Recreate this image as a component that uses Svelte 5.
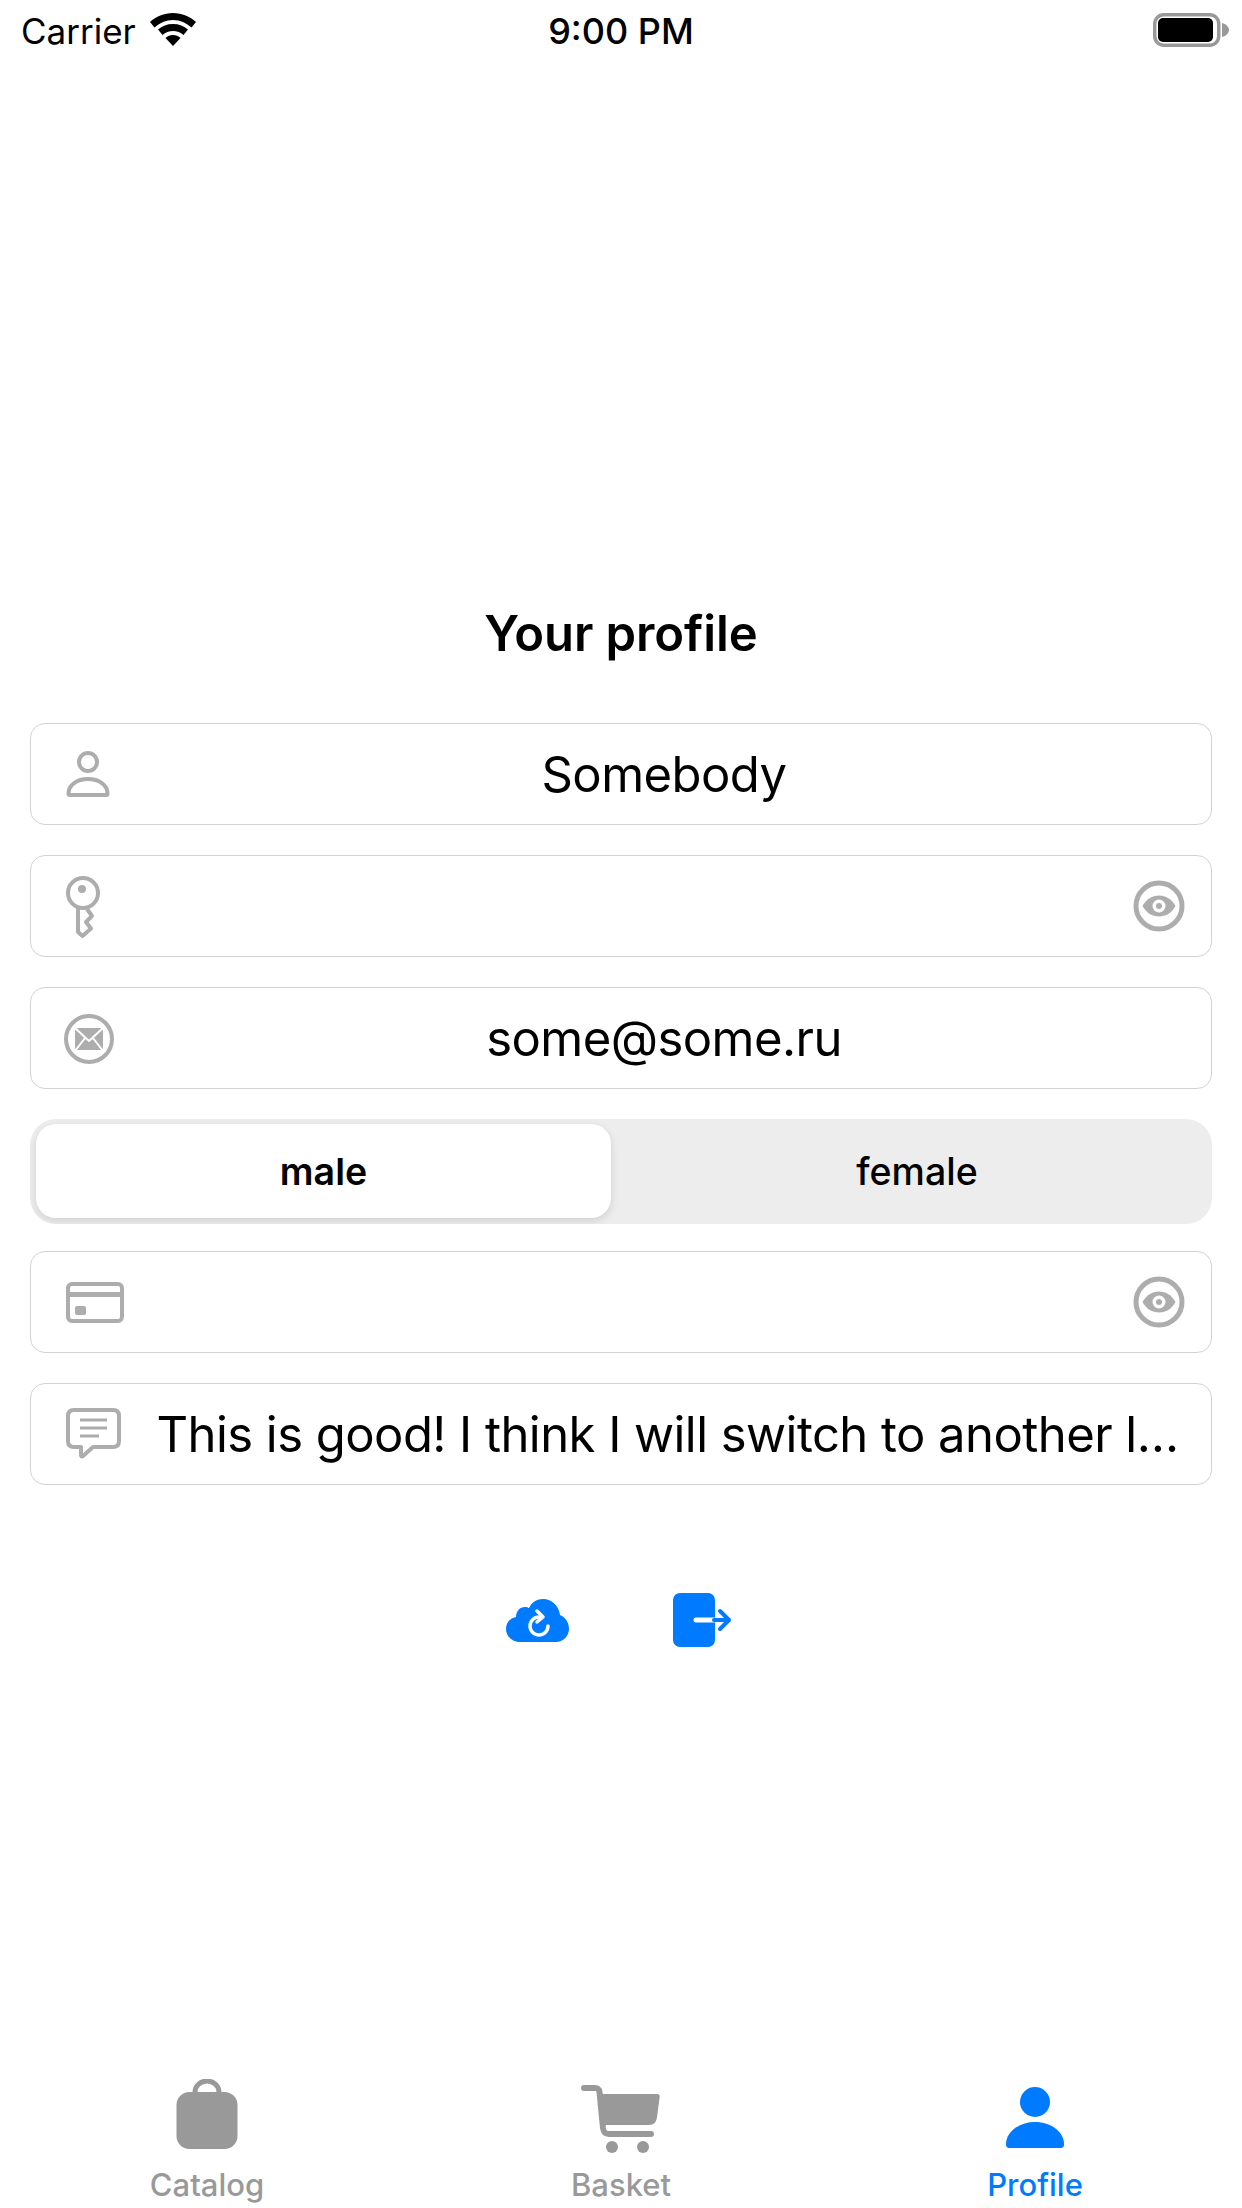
<script>
	const tabs = [
		{ label: 'Catalog', active: false },
		{ label: 'Basket', active: false },
		{ label: 'Profile', active: true },
	]
</script>

<div class="screen">
	<header class="status">
		<div class="status-left">
			<span>Carrier</span>
			<svg class="wifi" viewBox="0 0 46 33" width="46" height="33">
				<path d="M23 0C14 0 6 3.500 0 9l4.500 5.500C9.500 10 16 7 23 7s13.500 3 18.500 7.500L46 9C40 3.500 32 0 23 0z" />
				<path d="M23 11c-6 0-11 2-15 5.500l4.500 5.500c3-2.500 6.500-4 10.500-4s7.500 1.500 10.500 4l4.500-5.500C34 13 29 11 23 11z" />
				<path d="M23 22c-3 0-5.500 1-7.500 3L23 33l7.500-8c-2-2-4.500-3-7.500-3z" />
			</svg>
		</div>
		<span class="time">9:00 PM</span>
		<svg class="battery" viewBox="0 0 78 36" width="78" height="36">
			<rect x="2.750" y="2.750" width="64" height="30.500" rx="9" fill="none" stroke="#999" stroke-width="3.500" />
			<rect x="6" y="6" width="55" height="24" rx="5" fill="#000" />
			<path d="M70 11c4 1 7 4 7 7s-3 6-7 7z" fill="#999" />
		</svg>
	</header>

	<main class="form">
		<h1>Your profile</h1>

		<div class="field">
			<svg class="icon" viewBox="0 0 60 60" width="60" height="60">
				<circle cx="28" cy="18" r="9" />
				<path d="M8.500 49.500C8.500 41 17 35 28 35s19.500 6 19.500 14.500c0 1-.500 1.500-1.500 1.500H10c-1 0-1.500-.500-1.500-1.500z" />
			</svg>
			<span class="value">Somebody</span>
		</div>

		<div class="field">
			<svg class="icon" viewBox="0 0 60 70" width="60" height="70">
				<circle cx="23" cy="22" r="15" />
				<circle class="solid" cx="22" cy="18" r="4" />
				<path d="M18 37v24l4.500 4 8.500-7.500-5-6.500 6-6-5-7" />
			</svg>
			<div class="value"></div>
			<svg class="eye" viewBox="0 0 54 54" width="54" height="54">
				<circle class="ring" cx="27" cy="27" r="23" />
				<path class="solid" d="M10.500 27c4-7 9.500-10.500 16.500-10.500S39.500 20 43.500 27c-4 7-9.500 10.500-16.500 10.500S14.500 34 10.500 27z" />
				<circle cx="27" cy="27" r="6.500" fill="#fff" />
				<circle class="solid" cx="27" cy="27" r="3" />
			</svg>
		</div>

		<div class="field">
			<svg class="icon" viewBox="0 0 60 60" width="60" height="60">
				<circle cx="29" cy="31" r="23" />
				<rect class="solid" x="15" y="20" width="28" height="22" rx="3" />
				<path class="cut" d="M15 20l14 13 14-13M15 43l10-13M43 43L33 30" />
			</svg>
			<span class="value">some@some.ru</span>
		</div>

		<div class="segment">
			<div class="thumb">male</div>
			<div class="option">female</div>
		</div>

		<div class="field">
			<svg class="icon" viewBox="0 0 70 60" width="70" height="60">
				<rect x="8" y="12" width="54" height="37" rx="4" />
				<rect class="solid" x="8" y="20" width="54" height="5" />
				<rect class="solid" x="15" y="34" width="11" height="9" rx="2" />
			</svg>
			<div class="value"></div>
			<svg class="eye" viewBox="0 0 54 54" width="54" height="54">
				<circle class="ring" cx="27" cy="27" r="23" />
				<path class="solid" d="M10.500 27c4-7 9.500-10.500 16.500-10.500S39.500 20 43.500 27c-4 7-9.500 10.500-16.500 10.500S14.500 34 10.500 27z" />
				<circle cx="27" cy="27" r="6.500" fill="#fff" />
				<circle class="solid" cx="27" cy="27" r="3" />
			</svg>
		</div>

		<div class="field">
			<svg class="icon" viewBox="0 0 64 60" width="64" height="60">
				<path d="M14 6h39c4 0 6 2 6 6v25c0 4-2 6-6 6H33l-10 9c-1 1-2 .500-2-1v-8h-7c-4 0-6-2-6-6V12c0-4 2-6 6-6z" />
				<path class="line" d="M20 16h27M20 24h27M20 32h19" />
			</svg>
			<span class="value left">This is good! I think I will switch to another l…</span>
		</div>

		<div class="actions">
			<svg viewBox="0 0 64 44" width="64" height="44">
				<path class="blue" d="M14 43C6 43 0 37 0 30c0-6 4-11 10-12 0-6 4-10 9-10 2 0 3 .500 4 1 3-6 8-9 14-9 9 0 16 7 17 16 5 2 9 7 9 14 0 7-6 13-13 13z" />
				<path class="refresh" d="M33 18a9 9 0 1 0 9 9" />
				<path class="refresh" d="M31 12l6 6-6 5" />
			</svg>
			<svg viewBox="0 0 60 56" width="60" height="56">
				<rect class="blue" x="0" y="0" width="42" height="54" rx="7" />
				<path class="arrow-in" d="M23 27h18" />
				<path class="arrow-out" d="M41 27h15M47 18l9 9-9 9" />
			</svg>
		</div>
	</main>

	<nav class="tabbar">
		{#each tabs as tab}
			<div class="tab" class:active={tab.active}>
				{#if tab.label === 'Catalog'}
					<svg viewBox="0 0 70 76" width="70" height="76">
						<path d="M23 15v-2a12 11 0 0 1 24 0v2" fill="none" stroke="currentColor" stroke-width="5" />
						<rect x="4.500" y="13" width="61" height="57" rx="13" fill="currentColor" />
					</svg>
				{:else if tab.label === 'Basket'}
					<svg viewBox="0 0 90 76" width="90" height="76">
						<path d="M8 9h11c3 0 4 1 4.500 4l3.500 36c.500 4 2 6 6 6h42" fill="none" stroke="currentColor" stroke-width="6" stroke-linecap="round" />
						<path d="M24 15h57c2 0 3 1 2.700 3L81 38c-.500 5-3 8-8 8H28z" fill="currentColor" />
						<circle cx="36" cy="68" r="6" fill="currentColor" />
						<circle cx="67" cy="68" r="6" fill="currentColor" />
					</svg>
				{:else}
					<svg viewBox="0 0 70 76" width="70" height="76">
						<circle cx="35" cy="23" r="15" fill="currentColor" />
						<path d="M6 65c0-12 13-22 29-22s29 10 29 22c0 3-1 4-4 4H10c-3 0-4-1-4-4z" fill="currentColor" />
					</svg>
				{/if}
				<span>{tab.label}</span>
			</div>
		{/each}
	</nav>
</div>

<style>
	:global(body) {
		margin: 0;
		background: #fff;
	}

	.screen {
		width: 1242px;
		height: 2208px;
		display: flex;
		flex-direction: column;
		font-family: Inter, 'Liberation Sans', sans-serif;
		color: #000;
		overflow: hidden;
	}

	.status {
		height: 62px;
		display: grid;
		grid-template-columns: 1fr auto 1fr;
		align-items: center;
		font-size: 35px;
	}

	.status-left {
		margin-left: 21px;
		display: flex;
		align-items: center;
		gap: 14px;
	}

	.wifi {
		margin-bottom: 3px;
	}

	.time {
		font-size: 36px;
		font-weight: 500;
	}

	.battery {
		justify-self: end;
		margin-right: 12px;
		margin-bottom: 2px;
	}

	.form {
		flex: 1;
		padding: 543px 30px 0;
		display: flex;
		flex-direction: column;
	}

	h1 {
		margin: 0 0 60px;
		font-size: 49px;
		line-height: 58px;
		font-weight: 600;
		letter-spacing: -0.1px;
		text-align: center;
	}

	.field {
		box-sizing: border-box;
		height: 102px;
		margin-bottom: 30px;
		padding: 0 25.500px 0 28.500px;
		display: flex;
		align-items: center;
		gap: 23px;
		border: 1.500px solid #d2d2d2;
		border-radius: 15px;
	}

	.icon {
		flex: none;
		fill: none;
		stroke: #adadad;
		stroke-width: 4;
		stroke-linejoin: round;
	}

	.icon .solid,
	.eye .solid {
		fill: #adadad;
		stroke: none;
	}

	.icon .cut {
		stroke: #fff;
		stroke-width: 2;
	}

	.icon .line {
		stroke-width: 3;
	}

	.eye {
		flex: none;
	}

	.ring {
		fill: none;
		stroke: #adadad;
		stroke-width: 5;
	}

	.value {
		flex: 1;
		min-width: 0;
		font-size: 49px;
		letter-spacing: -0.55px;
		text-align: center;
		white-space: nowrap;
	}

	.value.left {
		margin-left: 10px;
		text-align: left;
	}

	.segment {
		box-sizing: border-box;
		height: 105px;
		margin-bottom: 27px;
		padding: 5px 0 6px 6px;
		display: flex;
		align-items: stretch;
		background: #ededed;
		border-radius: 26px;
		font-size: 37.500px;
		overflow: hidden;
	}

	.thumb {
		width: 575px;
		flex: none;
		display: flex;
		align-items: center;
		justify-content: center;
		background: #fff;
		border-radius: 20px;
		font-weight: 600;
		box-shadow: 0 3px 8px rgba(0, 0, 0, 0.12);
	}

	.option {
		flex: 1;
		padding-left: 11px;
		display: flex;
		align-items: center;
		justify-content: center;
		font-weight: 500;
	}

	.actions {
		margin-top: 78px;
		padding-right: 3px;
		display: flex;
		justify-content: center;
		align-items: center;
		gap: 103px;
	}

	.blue {
		fill: #007aff;
	}

	.refresh {
		fill: none;
		stroke: #fff;
		stroke-width: 3.500;
		stroke-linecap: round;
		stroke-linejoin: round;
	}

	.arrow-in {
		stroke: #fff;
		stroke-width: 5;
		stroke-linecap: round;
	}

	.arrow-out {
		fill: none;
		stroke: #007aff;
		stroke-width: 4;
		stroke-linecap: round;
		stroke-linejoin: round;
	}

	.tabbar {
		height: 144px;
		padding-top: 15px;
		box-sizing: border-box;
		display: grid;
		grid-template-columns: repeat(3, 1fr);
		color: #999;
	}

	.tab {
		display: flex;
		flex-direction: column;
		align-items: center;
		gap: 11px;
		font-size: 31px;
		line-height: 38px;
		font-weight: 500;
	}

	.tab.active {
		color: #007aff;
	}
</style>
